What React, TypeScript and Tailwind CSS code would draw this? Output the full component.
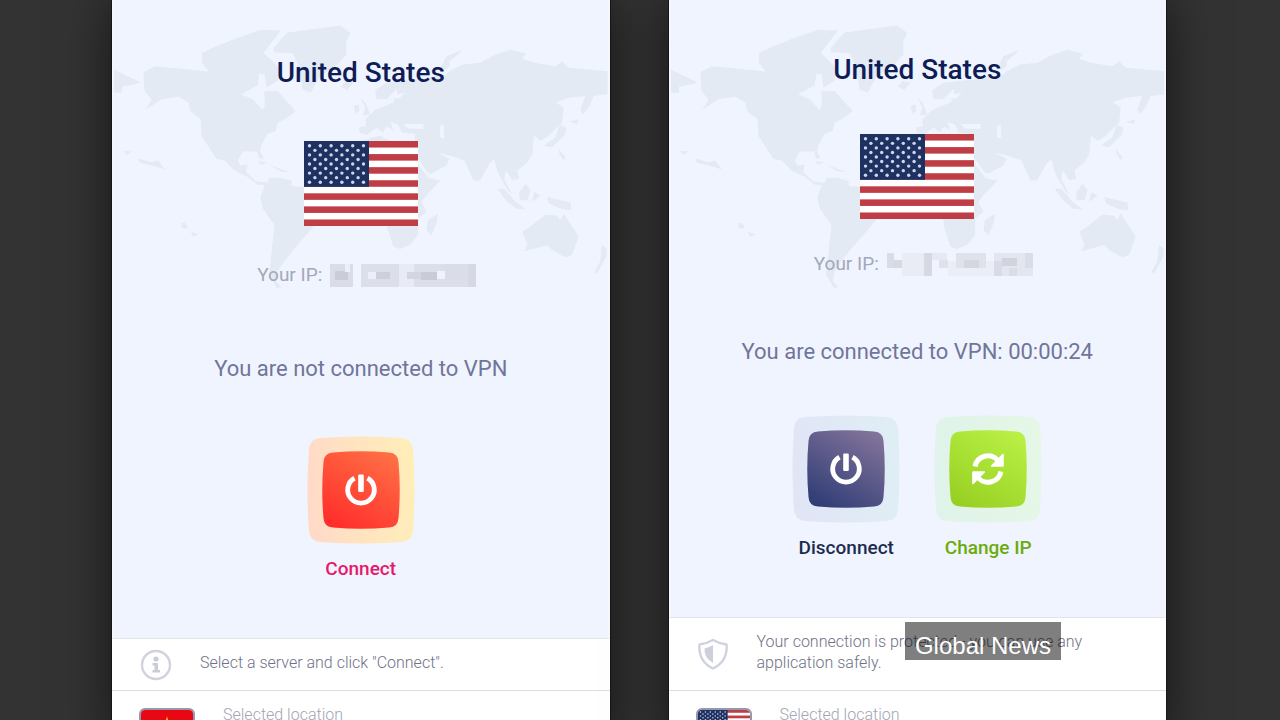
import { ReactNode } from "react";
import clsx from "clsx";

const land = [
  "M125 218L160 200L240 208L322 216L302 190L302 160L340 142L400 118L480 90L540 92L488 160L512 182L535 205L530 245L496 264L492 225L475 222L470 258L420 285L455 300L485 332L492 318L490 275L530 275L585 335L560 355L530 372L525 395L500 405L480 440L478 458L488 478L475 480L468 458L425 458L410 485L418 500L440 498L435 520L465 548L500 552L505 538L535 536L572 546L574 562L612 566L690 620L635 690L590 740L550 790L530 820L525 850L542 868L528 870L505 830L512 760L521 680L485 630L478 595L492 560L470 558L440 535L400 515L370 485L345 480L300 410L298 360L265 335L262 310L230 292L180 300L130 332L150 302L128 275Z",
  "M560 98L720 77L750 100L738 125L738 165L700 205L680 215L655 235L630 280L605 270L600 235L590 190L575 160L520 158L518 145Z",
  "M36 210L118 250L60 262L60 280L36 280Z",
  "M62 455L88 458L75 468ZM108 478L150 490L170 485L190 512L150 500L115 492ZM240 675L250 672L260 690L240 690ZM268 700L292 708L275 715Z",
  "M470 487L500 490L480 498ZM505 498L565 520L540 518ZM735 245L760 250L740 272L722 262Z",
  "M780 295L795 310L810 345L788 350L795 325ZM760 320L775 315L778 335L765 342Z",
  "M776 385L798 380L795 360L825 332L880 310L885 300L828 300L825 272L860 250L950 240L1040 225L1050 215L1090 195L1140 190L1190 165L1235 150L1280 162L1270 178L1310 190L1370 200L1390 185L1410 205L1470 210L1527 215L1527 285L1485 290L1470 325L1452 345L1445 330L1460 290L1410 295L1370 310L1395 325L1390 370L1350 410L1325 425L1305 410L1300 465L1285 490L1255 515L1260 540L1240 545L1220 515L1215 540L1240 590L1225 575L1195 520L1185 480L1170 495L1142 545L1122 545L1095 485L1050 470L1015 462L1050 480L1040 500L995 525L985 520L995 540L1022 545L980 590L965 610L980 640L955 660L955 710L930 740L900 752L880 745L862 690L850 600L790 560L780 425L840 410L870 425L945 430L945 405L905 400L895 378L872 368L880 395L860 382L848 400L830 385L800 408L778 402Z",
  "M1015 645L1012 670L995 712L980 695L985 665ZM1195 570L1215 570L1250 610L1280 632L1250 630L1220 605ZM1260 580L1280 555L1295 575L1285 605L1262 605ZM1305 580L1325 590L1300 610ZM1345 595L1415 612L1418 635L1390 632L1350 615Z",
  "M1382 378L1402 385L1400 405L1360 445L1335 440L1370 415ZM1410 368L1440 360L1435 375ZM1380 450L1400 475L1395 485L1382 465Z",
  "M1270 700L1300 680L1340 648L1375 652L1385 665L1395 645L1440 715L1420 770L1400 778L1360 755L1345 740L1275 760L1285 740Z",
  "M1510 740L1524 750L1524 775L1495 828L1488 820L1505 790ZM1025 200L1040 170L1090 150L1075 165L1050 185L1050 200L1035 212Z",
];

function WorldMap() {
  return (
    <svg
      className="absolute inset-x-0 top-0 w-full"
      viewBox="36 0 1491 900"
      aria-hidden="true"
    >
      <g fill="#e3eaf3">
        {land.map((d) => (
          <path key={d} d={d} />
        ))}
      </g>
      <path
        d="M910 375L972 375L970 390L925 388ZM1020 380L1032 378L1034 418L1022 416ZM955 480L995 538L988 540L950 490ZM860 300L890 268L892 285L915 280L900 296Z"
        fill="#f0f4fe"
      />
    </svg>
  );
}

const stripes = [0, 2, 4, 6, 8, 10, 12];
const starRows = [0, 1, 2, 3, 4, 5, 6, 7, 8];

function UsaFlag({ className }: { className: string }) {
  return (
    <svg
      className={className}
      viewBox="0 0 114 85"
      preserveAspectRatio="none"
      role="img"
      aria-label="Flag of the United States"
    >
      <rect width="114" height="85" fill="#fff" />
      {stripes.map((i) => (
        <rect key={i} y={i * 6.54} width="114" height="6.54" fill="#bf3d44" />
      ))}
      <rect width="65" height="45.8" fill="#1e3161" />
      {starRows.map((row) =>
        Array.from({ length: row % 2 ? 5 : 6 }, (_, col) => (
          <circle
            key={`${row}-${col}`}
            cx={5.5 + col * 10.8 + (row % 2 ? 5.4 : 0)}
            cy={4.8 + row * 4.55}
            r="1.7"
            fill="#cfd8ea"
          />
        ))
      )}
    </svg>
  );
}

function VietnamFlag({ className }: { className: string }) {
  return (
    <svg
      className={className}
      viewBox="0 0 56 40"
      preserveAspectRatio="none"
      role="img"
      aria-label="Flag of Vietnam"
    >
      <rect width="56" height="40" fill="#ea0714" />
      <path
        d="M28 7L31 16.500L40 16.700L33 22L35.500 30.500L28 25.500L20.500 30.500L23 22L16 16.700L25 16.500Z"
        fill="#ffb31a"
      />
    </svg>
  );
}

// [x, y, width, height, colour]
type Block = [number, number, number, number, string];

const hiddenIpLeft: Block[] = [
  [0, 0, 23, 23, "#dadde8"],
  [5, 7, 13, 9, "#c9cdda"],
  [15, 0, 5, 8, "#eceff8"],
  [31, 0, 115, 23, "#dcdfe9"],
  [38, 8, 8, 7, "#eceff8"],
  [46, 8, 14, 7, "#cdd0dc"],
  [69, 0, 15, 23, "#e8ebf5"],
  [77, 8, 14, 7, "#d3d6e1"],
  [91, 8, 16, 8, "#c9ccd8"],
  [107, 7, 8, 8, "#f0f3fb"],
  [115, 0, 15, 16, "#dadde7"],
  [138, 0, 8, 23, "#d6d9e4"],
];

const hiddenIpRight: Block[] = [
  [0, 0, 7, 15, "#d9dce6"],
  [7, 7, 15, 8, "#d6d9e3"],
  [15, 0, 15, 23, "#e9ecf5"],
  [30, 0, 8, 23, "#e9ecf5"],
  [37, 0, 8, 23, "#d6d9e3"],
  [45, 0, 15, 7, "#e6e9f2"],
  [52, 7, 9, 8, "#dfe2ec"],
  [61, 8, 46, 15, "#ebeef7"],
  [69, 0, 30, 15, "#dfe2eb"],
  [77, 7, 15, 8, "#d3d7e1"],
  [107, 0, 39, 23, "#e3e6ef"],
  [107, 8, 8, 15, "#d9dce6"],
  [115, 5, 15, 8, "#d0d4de"],
  [122, 15, 8, 8, "#dadde7"],
  [138, 0, 8, 15, "#dadde7"],
];

function HiddenIp({ blocks }: { blocks: Block[] }) {
  return (
    <svg
      width="146"
      height="23"
      viewBox="0 0 146 23"
      role="img"
      aria-label="Hidden address"
    >
      {blocks.map(([x, y, w, h, fill], index) => (
        <rect key={index} x={x} y={y} width={w} height={h} fill={fill} />
      ))}
    </svg>
  );
}

function PowerIcon() {
  return (
    <g>
      <path
        d="M47.500 42.200A13.300 13.300 0 1 0 60.500 42.200"
        fill="none"
        stroke="#fff"
        strokeWidth="4.8"
      />
      <rect x="51.200" y="38.500" width="5.600" height="17.500" rx="1.200" fill="#fff" />
    </g>
  );
}

function RefreshIcon() {
  return (
    <g>
      <path
        d="M41 51.500A13.200 13.200 0 0 1 64 45.500M67 56.500A13.200 13.200 0 0 1 44 62.500"
        fill="none"
        stroke="#fff"
        strokeWidth="5"
      />
      <path
        d="M69 39.500V51H57.700ZM39 68.500V57H50.300Z"
        fill="#fff"
        stroke="#fff"
        strokeWidth="1.6"
        strokeLinejoin="round"
      />
    </g>
  );
}

type RoundButtonProps = {
  id: string;
  label: string;
  labelClass: string;
  outer: [string, string];
  inner: [string, string];
  children: ReactNode;
};

function RoundButton({
  id,
  label,
  labelClass,
  outer,
  inner,
  children,
}: RoundButtonProps) {
  return (
    <button type="button" className="flex w-27 flex-col items-center gap-[13px]">
      <svg className="h-27 w-27" viewBox="0 0 108 108" aria-hidden="true">
        <defs>
          <linearGradient id={`${id}-outer`} x1="0" y1="0.5" x2="1" y2="0.4">
            <stop offset="0" stopColor={outer[0]} />
            <stop offset="1" stopColor={outer[1]} />
          </linearGradient>
          <linearGradient id={`${id}-inner`} x1="0.2" y1="1" x2="0.8" y2="0">
            <stop offset="0" stopColor={inner[0]} />
            <stop offset="1" stopColor={inner[1]} />
          </linearGradient>
        </defs>
        <path
          d="M13 2Q54 -1 95 2Q105 3 106 13Q109 54 106 95Q105 105 95 106Q54 109 13 106Q3 105 2 95Q-1 54 2 13Q3 3 13 2Z"
          fill={`url(#${id}-outer)`}
        />
        <path
          d="M26 16.500Q54 14 82 16.500Q91 17 91.500 26Q94 54 91.500 82Q91 91 82 91.500Q54 94 26 91.500Q17 91 16.500 82Q14 54 16.500 26Q17 17 26 16.500Z"
          fill={`url(#${id}-inner)`}
        />
        {children}
      </svg>
      <span className={clsx("text-[19px] leading-6 font-medium whitespace-nowrap", labelClass)}>
        {label}
      </span>
    </button>
  );
}

function InfoIcon() {
  return (
    <svg width="32" height="32" viewBox="0 0 32 32" aria-hidden="true">
      <circle cx="16" cy="16" r="14" fill="none" stroke="#d0d2de" strokeWidth="2.400" />
      <circle cx="16" cy="10" r="2.600" fill="#c9cbd8" />
      <path d="M12.500 14H18V21H20V23.500H12.500V21H14.500V16.500H12.500Z" fill="#c9cbd8" />
    </svg>
  );
}

function ShieldIcon() {
  return (
    <svg width="32" height="32" viewBox="0 0 32 32" aria-hidden="true">
      <path
        d="M16 2Q22 5.500 29.500 6.500Q31 23 16 30.500Q1 23 2.500 6.500Q10 5.500 16 2Z"
        fill="none"
        stroke="#d0d3df"
        strokeWidth="2.400"
        strokeLinejoin="round"
      />
      <path d="M16 7V25Q7 20 7.500 10.500Q12 9.500 16 7Z" fill="#cdd0dc" />
    </svg>
  );
}

type PanelProps = {
  country: string;
  hiddenIp: Block[];
  status: string;
  compact?: boolean;
  actions: ReactNode;
  infoIcon: ReactNode;
  info: string;
  locationFlag: ReactNode;
};

function Panel({
  country,
  hiddenIp,
  status,
  compact,
  actions,
  infoIcon,
  info,
  locationFlag,
}: PanelProps) {
  return (
    <section className="flex min-w-0 flex-col bg-white shadow-[0_0_0_1px_#151617,0_0_48px_rgba(0,0,0,0.6)]">
      <div
        className={clsx(
          "relative border-x-2 border-b border-x-[#f5f6fa] border-b-[#e2e4ea] bg-[#f0f4fe] pb-[57px]",
          compact ? "pt-[52px]" : "pt-[55px]"
        )}
      >
        <WorldMap />
        <div className="relative flex flex-col items-center">
          <h2 className="text-[28px] leading-9 font-medium text-[#0f1d56]">
            {country}
          </h2>
          <UsaFlag
            className={clsx("h-[85px] w-[114px]", compact ? "mt-[46px]" : "mt-[50px]")}
          />
          <p
            className={clsx(
              "flex items-center gap-2 pl-3 text-[19px] leading-7 text-[#a3a8bb]",
              compact ? "mt-[31px]" : "mt-[35px]"
            )}
          >
            Your IP: <HiddenIp blocks={hiddenIp} />
          </p>
          <p
            className={clsx(
              "text-[22px] leading-8 text-[#70759a]",
              compact ? "mt-[58px]" : "mt-16"
            )}
          >
            {status}
          </p>
          <div className={clsx("flex gap-[34px]", compact ? "mt-[47px]" : "mt-[51px]")}>
            {actions}
          </div>
        </div>
      </div>
      <div
        className={clsx(
          "flex items-center gap-7 border-b border-[#dcdde2] px-7 font-light text-[#6f7287]",
          compact ? "h-[73px]" : "h-[52px]"
        )}
      >
        <div className="shrink-0">{infoIcon}</div>
        <p className="pb-1 text-base leading-[21px]">{info}</p>
      </div>
      <div className="flex gap-7 px-[27px] pt-[17px]">
        <div className="h-10 w-14 shrink-0 overflow-hidden rounded-md border-2 border-[#9399ad]">
          {locationFlag}
        </div>
        <p className="-mt-[3px] text-base leading-5 font-light text-[#a3a5b3]">
          Selected location
        </p>
      </div>
    </section>
  );
}

export default function App() {
  return (
    <main className="relative grid h-screen grid-cols-2 gap-[59px] overflow-hidden bg-[#333333] pr-[114px] pl-28 font-[Roboto,sans-serif]">
      <Panel
        country="United States"
        hiddenIp={hiddenIpLeft}
        status="You are not connected to VPN"
        actions={
          <RoundButton
            id="connect"
            label="Connect"
            labelClass="text-[#e5186c]"
            outer={["#ffdac8", "#ffeeb8"]}
            inner={["#ff2d2b", "#ff6f45"]}
          >
            <PowerIcon />
          </RoundButton>
        }
        infoIcon={<InfoIcon />}
        info={'Select a server and click "Connect".'}
        locationFlag={<VietnamFlag className="h-full w-full" />}
      />
      <Panel
        country="United States"
        hiddenIp={hiddenIpRight}
        status="You are connected to VPN: 00:00:24"
        compact
        actions={
          <>
            <RoundButton
              id="disconnect"
              label="Disconnect"
              labelClass="text-[#1c2c50]"
              outer={["#e1e5f6", "#dfeef5"]}
              inner={["#303d76", "#82739a"]}
            >
              <PowerIcon />
            </RoundButton>
            <RoundButton
              id="change"
              label="Change IP"
              labelClass="text-[#6bab0c]"
              outer={["#e0f3ea", "#e5f7e5"]}
              inner={["#97d022", "#baf045"]}
            >
              <RefreshIcon />
            </RoundButton>
          </>
        }
        infoIcon={<ShieldIcon />}
        info="Your connection is protected - you can use any application safely."
        locationFlag={<UsaFlag className="h-full w-full" />}
      />
      <div className="absolute right-[219px] bottom-[60px] bg-black/50 px-[10px] pt-[10px] font-['Liberation_Sans',sans-serif] text-2xl leading-7 text-white">
        Global News
      </div>
    </main>
  );
}
